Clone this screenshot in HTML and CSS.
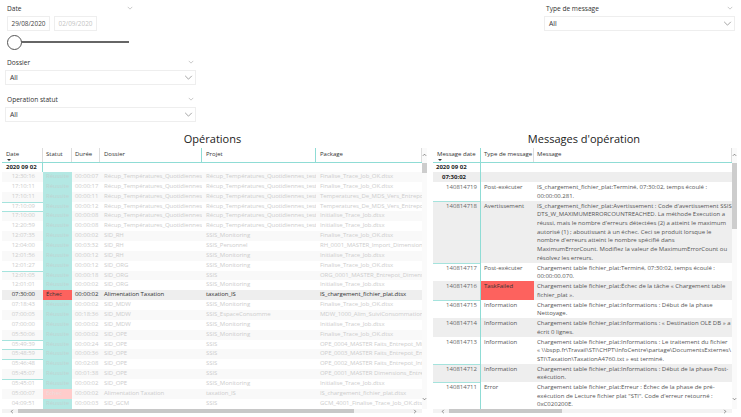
FILE: index.html
```html
<!DOCTYPE html>
<html>
<head>
	<title>Opérations</title>
	<link rel="stylesheet" href="styles.css">
</head>
<body>
	<div class="filters">
		<div class="filter-col left-col">
			<div class="date-filter">
				<div class="filter-head"><span>Date</span><svg class="chev-s" viewBox="0 0 8 5"><path d="M1 1l3 3 3-3"/></svg></div>
				<div class="date-inputs">
					<div class="date-box">29/08/2020</div>
					<div class="date-box off">02/09/2020</div>
				</div>
				<div class="slider"><div class="knob"></div></div>
			</div>
			<div class="filter-head wide"><span>Dossier</span><svg class="chev-s" viewBox="0 0 8 5"><path d="M1 1l3 3 3-3"/></svg></div>
			<div class="select"><span>All</span><svg class="chev" viewBox="0 0 10 6"><path d="M1 1l4 4 4-4"/></svg></div>
			<div class="filter-head wide second"><span>Operation statut</span><svg class="chev-s" viewBox="0 0 8 5"><path d="M1 1l3 3 3-3"/></svg></div>
			<div class="select"><span>All</span><svg class="chev" viewBox="0 0 10 6"><path d="M1 1l4 4 4-4"/></svg></div>
		</div>
		<div class="filter-col right-col">
			<div class="filter-head wide"><span>Type de message</span><svg class="chev-s" viewBox="0 0 8 5"><path d="M1 1l3 3 3-3"/></svg></div>
			<div class="select"><span>All</span><svg class="chev" viewBox="0 0 10 6"><path d="M1 1l4 4 4-4"/></svg></div>
		</div>
	</div>

	<div class="panels">
		<div class="panel ops">
			<h2>Opérations</h2>
			<div class="visual">
				<div class="table">
					<div class="row head">
						<div class="c">Date<i class="sort"></i></div><div class="c">Statut</div><div class="c">Durée</div><div class="c">Dossier</div><div class="c">Projet</div><div class="c">Package</div>
					</div>
					<div class="row day"><div class="c">2020 09 02</div></div>
					<div class="rows">
						<div class="row"><div class="c t">12:30:16</div><div class="c ok">Réussite</div><div class="c">00:00:07</div><div class="c">Récup_Températures_Quotidiennes</div><div class="c">Récup_Températures_Quotidiennes_test</div><div class="c">Finalise_Trace_Job_OK.dtsx</div></div>
						<div class="row"><div class="c t">17:10:11</div><div class="c ok">Réussite</div><div class="c">00:00:17</div><div class="c">Récup_Températures_Quotidiennes</div><div class="c">Récup_Températures_Quotidiennes_test</div><div class="c">Finalise_Trace_Job_OK.dtsx</div></div>
						<div class="row"><div class="c t">17:10:11</div><div class="c ok">Réussite</div><div class="c">00:00:11</div><div class="c">Récup_Températures_Quotidiennes</div><div class="c">Récup_Températures_Quotidiennes_test</div><div class="c">Temperatures_De_MDS_Vers_Entrepot</div></div>
						<div class="row mark"><div class="c t">17:10:09</div><div class="c ok">Réussite</div><div class="c">00:00:12</div><div class="c">Récup_Températures_Quotidiennes</div><div class="c">Récup_Températures_Quotidiennes_test</div><div class="c">Temperatures_De_MDS_Vers_Entrepot</div></div>
						<div class="row mark"><div class="c t">17:10:00</div><div class="c ok">Réussite</div><div class="c">00:00:08</div><div class="c">Récup_Températures_Quotidiennes</div><div class="c">Récup_Températures_Quotidiennes_test</div><div class="c">Initialise_Trace_Job.dtsx</div></div>
						<div class="row"><div class="c t">12:20:59</div><div class="c ok">Réussite</div><div class="c">00:00:08</div><div class="c">Récup_Températures_Quotidiennes</div><div class="c">Récup_Températures_Quotidiennes_test</div><div class="c">Initialise_Trace_Job.dtsx</div></div>
						<div class="row"><div class="c t">12:07:35</div><div class="c ok">Réussite</div><div class="c">00:00:02</div><div class="c">SID_RH</div><div class="c">SSIS_Monitoring</div><div class="c">Finalise_Trace_Job_OK.dtsx</div></div>
						<div class="row"><div class="c t">12:04:00</div><div class="c ok">Réussite</div><div class="c">00:03:32</div><div class="c">SID_RH</div><div class="c">SSIS_Personnel</div><div class="c">RH_0001_MASTER_Import_Dimension</div></div>
						<div class="row"><div class="c t">12:01:56</div><div class="c ok">Réussite</div><div class="c">00:00:12</div><div class="c">SID_RH</div><div class="c">SSIS_Monitoring</div><div class="c">Initialise_Trace_Job.dtsx</div></div>
						<div class="row"><div class="c t">12:01:27</div><div class="c ok">Réussite</div><div class="c">00:00:12</div><div class="c">SID_ORG</div><div class="c">SSIS_Monitoring</div><div class="c">Finalise_Trace_Job_OK.dtsx</div></div>
						<div class="row mark"><div class="c t">12:01:05</div><div class="c ok">Réussite</div><div class="c">00:00:18</div><div class="c">SID_ORG</div><div class="c">SSIS</div><div class="c">ORG_0001_MASTER_Entrepot_Dimens</div></div>
						<div class="row"><div class="c t">12:01:01</div><div class="c ok">Réussite</div><div class="c">00:00:02</div><div class="c">SID_ORG</div><div class="c">SSIS_Monitoring</div><div class="c">Initialise_Trace_Job.dtsx</div></div>
						<div class="row sel"><div class="c t">07:30:00</div><div class="c ko">Échec</div><div class="c">00:00:02</div><div class="c">Alimentation Taxation</div><div class="c">taxation_IS</div><div class="c">IS_chargement_fichier_plat.dtsx</div></div>
						<div class="row"><div class="c t">07:18:43</div><div class="c ok">Réussite</div><div class="c">00:00:02</div><div class="c">SID_MDW</div><div class="c">SSIS_Monitoring</div><div class="c">Finalise_Trace_Job_OK.dtsx</div></div>
						<div class="row"><div class="c t">07:00:05</div><div class="c ok">Réussite</div><div class="c">00:18:36</div><div class="c">SID_MDW</div><div class="c">SSIS_EspaceConsomme</div><div class="c">MDW_1000_Alim_SuiviConsommation</div></div>
						<div class="row"><div class="c t">07:00:00</div><div class="c ok">Réussite</div><div class="c">00:00:02</div><div class="c">SID_MDW</div><div class="c">SSIS_Monitoring</div><div class="c">Initialise_Trace_Job.dtsx</div></div>
						<div class="row"><div class="c t">05:50:06</div><div class="c ok">Réussite</div><div class="c">00:00:02</div><div class="c">SID_OPE</div><div class="c">SSIS_Monitoring</div><div class="c">Finalise_Trace_Job_OK.dtsx</div></div>
						<div class="row mark"><div class="c t">05:49:39</div><div class="c ok">Réussite</div><div class="c">00:00:24</div><div class="c">SID_OPE</div><div class="c">SSIS</div><div class="c">OPE_0004_MASTER Faits_Entrepot_Mi</div></div>
						<div class="row mark"><div class="c t">05:48:59</div><div class="c ok">Réussite</div><div class="c">00:00:36</div><div class="c">SID_OPE</div><div class="c">SSIS</div><div class="c">OPE_0003_MASTER Faits_Entrepot_En</div></div>
						<div class="row mark"><div class="c t">05:46:48</div><div class="c ok">Réussite</div><div class="c">00:02:08</div><div class="c">SID_OPE</div><div class="c">SSIS</div><div class="c">OPE_0002_MASTER Faits_Entrepot_Int</div></div>
						<div class="row"><div class="c t">05:45:07</div><div class="c ok">Réussite</div><div class="c">00:01:38</div><div class="c">SID_OPE</div><div class="c">SSIS</div><div class="c">OPE_0001_MASTER Dimensions_Entre</div></div>
						<div class="row mark"><div class="c t">05:45:01</div><div class="c ok">Réussite</div><div class="c">00:00:02</div><div class="c">SID_OPE</div><div class="c">SSIS_Monitoring</div><div class="c">Initialise_Trace_Job.dtsx</div></div>
						<div class="row"><div class="c t">05:00:07</div><div class="c ko-off">Échec</div><div class="c">00:00:02</div><div class="c">Alimentation Taxation</div><div class="c">taxation_IS</div><div class="c">IS_chargement_fichier_plat.dtsx</div></div>
						<div class="row"><div class="c t">04:09:51</div><div class="c ok">Réussite</div><div class="c">00:00:03</div><div class="c">SID_GCM</div><div class="c">SSIS</div><div class="c">GCM_4001_Finalise_Trace_Job_OK.dtsx</div></div>
					</div>
				</div>
				<div class="vscroll">
					<svg class="arrow" viewBox="0 0 6 4"><path d="M1 3l2-2 2 2"/></svg>
					<div class="vthumb"></div>
					<svg class="arrow end" viewBox="0 0 6 4"><path d="M1 1l2 2 2-2"/></svg>
				</div>
				<div class="hscroll">
					<svg class="arrow" viewBox="0 0 4 6"><path d="M3 1L1 3l2 2"/></svg>
					<div class="hthumb"></div>
					<svg class="arrow end" viewBox="0 0 4 6"><path d="M1 1l2 2-2 2"/></svg>
				</div>
			</div>
		</div>

		<div class="panel msgs">
			<h2>Messages d'opération</h2>
			<div class="visual">
				<div class="table">
					<div class="row head">
						<div class="c">Message date<i class="sort"></i></div><div class="c">Type de message</div><div class="c">Message</div>
					</div>
					<div class="row group day"><div class="c">2020 09 02</div><div class="c"></div><div class="c"></div></div>
					<div class="row group sub"><div class="c">07:30:02</div><div class="c"></div><div class="c"></div></div>
					<div class="row h2"><div class="c id">140814719</div><div class="c">Post-exécuter</div><div class="c">IS_chargement_fichier_plat:Terminé, 07:30:02, temps écoulé :<br>00:00:00.281.</div></div>
					<div class="row h7 alt mark"><div class="c id">140814718</div><div class="c">Avertissement</div><div class="c">IS_chargement_fichier_plat:Avertissement : Code d'avertissement SSIS :<br>DTS_W_MAXIMUMERRORCOUNTREACHED. La méthode Execution a<br>réussi, mais le nombre d'erreurs détectées (2) a atteint le maximum<br>autorisé (1) ; aboutissant à un échec. Ceci se produit lorsque le<br>nombre d'erreurs atteint le nombre spécifié dans<br>MaximumErrorCount. Modifiez la valeur de MaximumErrorCount ou<br>résolvez les erreurs.</div></div>
					<div class="row h2 mark"><div class="c id">140814717</div><div class="c">Post-exécuter</div><div class="c">Chargement table fichier_plat:Terminé, 07:30:02, temps écoulé :<br>00:00:00.070.</div></div>
					<div class="row h2 alt"><div class="c id">140814716</div><div class="c ko">TaskFailed</div><div class="c">Chargement table fichier_plat:Échec de la tâche « Chargement table<br>fichier_plat ».</div></div>
					<div class="row h2 mark"><div class="c id">140814715</div><div class="c">Information</div><div class="c">Chargement table fichier_plat:Informations : Début de la phase<br>Nettoyage.</div></div>
					<div class="row h2 alt"><div class="c id">140814714</div><div class="c">Information</div><div class="c">Chargement table fichier_plat:Informations : « Destination OLE DB » a<br>écrit 0 lignes.</div></div>
					<div class="row h3"><div class="c id">140814713</div><div class="c">Information</div><div class="c">Chargement table fichier_plat:Informations : Le traitement du fichier<br>« \\bspp.fr\Travail\STI\CHPT\InfoCentre\partage\DocumentsExternes\<br>STI\Taxation\TaxationA4760.txt » est terminé.</div></div>
					<div class="row h2 alt mark"><div class="c id">140814712</div><div class="c">Information</div><div class="c">Chargement table fichier_plat:Informations : Début de la phase Post-<br>exécution.</div></div>
					<div class="row h3 mark"><div class="c id">140814711</div><div class="c">Error</div><div class="c">Chargement table fichier_plat:Erreur : Échec de la phase de pré-<br>exécution de Lecture fichier plat "STI". Code d'erreur retourné :<br>0xC020200E.</div></div>
				</div>
				<div class="vscroll">
					<svg class="arrow" viewBox="0 0 6 4"><path d="M1 3l2-2 2 2"/></svg>
					<div class="vthumb"></div>
					<svg class="arrow end" viewBox="0 0 6 4"><path d="M1 1l2 2 2-2"/></svg>
				</div>
				<div class="hscroll">
					<svg class="arrow" viewBox="0 0 4 6"><path d="M3 1L1 3l2 2"/></svg>
					<div class="hthumb"></div>
					<svg class="arrow end" viewBox="0 0 4 6"><path d="M1 1l2 2-2 2"/></svg>
				</div>
			</div>
		</div>
	</div>
</body>
</html>
```

FILE: styles.css
```css
* {
	box-sizing: border-box;
}
html, body {
	margin: 0;
	height: 417px;
	overflow: hidden;
	background: #fff;
}
body {
	font-family: "Open Sans", "Liberation Sans", sans-serif;
	font-size: 6px;
	color: #444;
}

/* slicers */
.filters {
	display: flex;
	justify-content: space-between;
	height: 130px;
	padding: 0 6px 0 5px;
}
.filter-col {
	width: 191px;
}
.date-filter {
	width: 129px;
	height: 51px;
	padding-left: 2px;
}
.filter-head {
	display: flex;
	justify-content: space-between;
	align-items: center;
	height: 16px;
	padding-right: 1px;
	font-size: 6.6px;
	color: #333;
}
.filter-head.wide {
	padding: 0 2px;
}
.date-filter + .filter-head {
	margin-top: 3px;
}
.filter-head.second {
	margin-top: 6px;
}
.chev-s {
	width: 6px;
	height: 4px;
	fill: none;
	stroke: #a8a8a8;
	stroke-width: 0.8;
}
.chev {
	width: 9px;
	height: 5px;
	fill: none;
	stroke: #777;
	stroke-width: 0.8;
}
.date-inputs {
	display: flex;
	gap: 4px;
}
.date-box {
	width: 43px;
	height: 15px;
	border: 1px solid #eee;
	line-height: 13px;
	text-align: center;
	font-size: 6.4px;
	color: #444;
}
.date-box.off {
	color: #c4c4c4;
}
.slider {
	position: relative;
	height: 2px;
	margin: 10px 0 0 7px;
	width: 115px;
	background: #666;
}
.knob {
	position: absolute;
	left: -7px;
	top: -6px;
	width: 15px;
	height: 15px;
	border: 1px solid #555;
	border-radius: 50%;
	background: #fff;
}
.select {
	display: flex;
	justify-content: space-between;
	align-items: center;
	height: 15px;
	padding: 0 2px 0 4px;
	border: 1px solid #eee;
	font-size: 6.8px;
	color: #333;
}

/* panels */
.panels {
	display: flex;
	gap: 6px;
	padding: 0 4px 0 2px;
}
.panel {
	width: 425px;
}
.panel.msgs {
	width: 304px;
}
h2 {
	margin: 0;
	height: 18px;
	padding-right: 4px;
	font-size: 11px;
	font-weight: normal;
	line-height: 17px;
	text-align: center;
	color: #222;
}
.msgs h2 {
	padding-right: 2px;
}
.visual {
	display: grid;
	grid-template-columns: 1fr 5px;
	grid-template-rows: 261px 4px;
}
.table {
	overflow: hidden;
}
.row {
	display: grid;
	height: 9.87px;
	line-height: 9.87px;
	white-space: nowrap;
}
.ops .row {
	grid-template-columns: 41px 29px 28px 102px 114px 106px;
}
.msgs .row {
	grid-template-columns: 48px 53px 1fr;
}
.c {
	overflow: hidden;
	padding: 0 0 0 4px;
}
.ops .c:nth-child(2), .ops .c:nth-child(3) {
	padding-left: 3px;
}
.row.head {
	position: relative;
	height: 15px;
	line-height: 13px;
	border-bottom: 1px solid #8fdcd5;
	color: #333;
}
.row.head .c {
	border-right: 1px solid #ddd;
}
.row.head .c:nth-child(4), .ops .row.head .c:nth-child(5) {
	border-right-color: #8fdcd5;
}
.sort {
	position: absolute;
	left: 5px;
	top: 11px;
	border: 2px solid transparent;
	border-top: 2px solid #333;
	border-bottom: 0;
}

/* left table rows */
.ops .rows .row {
	color: #cdcdcd;
	letter-spacing: -0.06px;
}
.ops .rows .row:nth-child(odd) {
	background: #f9f9f9;
}
.ops .rows .row.sel {
	background: #eee;
	color: #333;
}
.ops .rows .t {
	text-align: right;
	padding-right: 8px;
}
.ops .rows .ok {
	background: #b3e8e3;
	color: #bfd3d1;
}
.ops .rows .ko {
	background: #fd625e;
	color: #333;
}
.ops .rows .ko-off {
	background: #ffcccb;
	color: #eedcdc;
}
.row.day {
	font-weight: bold;
	color: #222;
	height: 9px;
	line-height: 9px;
}
.ops .row.day .c {
	border-right: 1px solid #8fdcd5;
}
.row.mark .c:first-child {
	box-shadow: inset 0 1px 0 #a5e3dd;
}

/* right table rows */
.msgs .row .c:first-child {
	border-right: 1px solid #8fdcd5;
}
.msgs .row.group .c:first-child {
	text-align: left;
	padding-left: 3px;
}
.msgs .row.sub {
	background: #eee;
	font-weight: bold;
	color: #222;
	height: 10px;
	line-height: 10px;
}
.msgs .row.sub .c:first-child {
	padding-left: 9px;
}
.msgs .row:not(.group):not(.head) {
	line-height: 8.7px;
	color: #555;
}
.msgs .row:not(.group):not(.head) .c {
	padding-top: 1px;
}
.msgs .row .c:last-child {
	padding-left: 3px;
}
.msgs .row .c:nth-child(2) {
	padding-left: 3px;
}
.msgs .ko {
	background: #fd625e;
	color: #333;
}
.msgs .alt {
	background: #eee;
}
.msgs .id {
	text-align: right;
	padding-right: 3px;
	color: #666;
}
.row.h2 {
	height: 18.5px;
}
.row.h3 {
	height: 27px;
}
.row.h7 {
	height: 62px;
}

/* scrollbars */
.vscroll {
	display: flex;
	flex-direction: column;
	align-items: center;
	background: #fafafa;
	padding-top: 5px;
}
.vthumb {
	width: 5px;
	height: 10px;
	margin-top: 6px;
	background: #cdcdcd;
}
.msgs .vthumb {
	height: 66px;
}
.arrow {
	width: 5px;
	height: 4px;
	fill: none;
	stroke: #555;
	stroke-width: 0.8;
	flex: none;
}
.arrow.end {
	margin-top: auto;
	margin-bottom: 8px;
}
.hscroll {
	display: flex;
	align-items: center;
	padding-left: 8px;
	background: #f3f3f3;
}
.hscroll .arrow {
	width: 4px;
	height: 5px;
}
.hscroll .arrow.end {
	margin: 0 5px 0 auto;
}
.hthumb {
	width: 336px;
	height: 4px;
	margin-left: 4px;
	background: #c8c8c8;
}
.msgs .hthumb {
	width: 113px;
}
```
